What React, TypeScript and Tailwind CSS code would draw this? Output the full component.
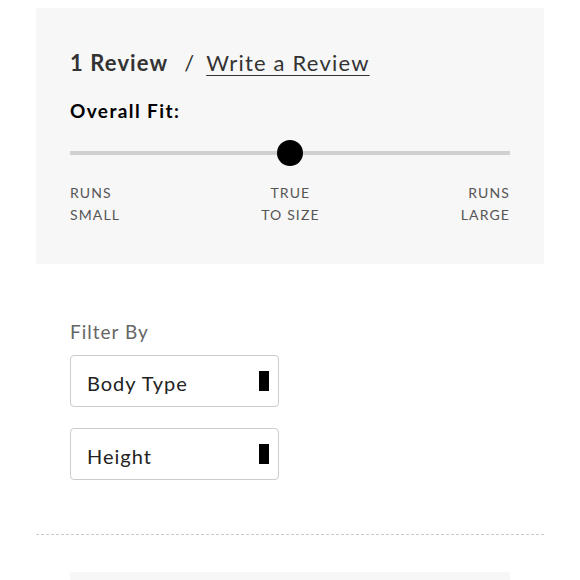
export default function App() {
  return (
    <div className="min-h-[580px] w-[580px] bg-white pt-2 text-[#222]" style={{ fontFamily: 'Lato, "Open Sans", sans-serif' }}>
      <section className="mx-9 h-[256px] bg-[#f7f7f7] px-[34px] pt-[39px]">
        <div className="flex items-baseline text-[22px] leading-[32px]">
          <span className="font-bold tracking-[1.1px] text-[#333]">1 Review</span>
          <span className="mr-[12px] ml-[16px] text-[#333]">/</span>
          <a className="tracking-[1.2px] text-[#333] underline decoration-1 underline-offset-4">Write a Review</a>
        </div>
        <h2 className="mt-[19px] text-[19px] leading-[26px] font-bold tracking-[1.4px] text-black">Overall Fit:</h2>
        <div className="relative mt-[16px] h-[26px]">
          <div className="absolute top-[11px] right-0 left-0 h-[4px] bg-[#d0d0d0]" />
          <div className="absolute top-0 left-1/2 h-[26px] w-[26px] -translate-x-1/2 rounded-full bg-black" />
        </div>
        <div className="mt-[16px] flex justify-between text-[14px] leading-[22px] tracking-[0.08em] text-[#555]">
          <span>RUNS<br />SMALL</span>
          <span className="text-center">TRUE<br />TO SIZE</span>
          <span className="text-right">RUNS<br />LARGE</span>
        </div>
      </section>
      <section className="mx-[70px] mt-[55px]">
        <p className="text-[19px] leading-[26px] tracking-[1px] text-[#666]">Filter By</p>
        <div className="mt-[10px] flex w-[209px] flex-col gap-[21px]">
          {['Body Type', 'Height'].map((label) => (
            <div key={label} className="flex h-[52px] items-center justify-between rounded-[4px] border border-[#ccc] bg-white pt-[3px] pr-[9px] pl-[16px]">
              <span className="text-[20px] tracking-[1px] text-[#222]">{label}</span>
              <span className="-mt-[3px] h-[20px] w-[10px] bg-black" />
            </div>
          ))}
        </div>
      </section>
      <div className="mx-9 mt-[54px] border-t border-dashed border-[#ccc]" />
      <div className="mx-[70px] mt-[37px] h-[20px] bg-[#f7f7f7]" />
    </div>
  )
}
